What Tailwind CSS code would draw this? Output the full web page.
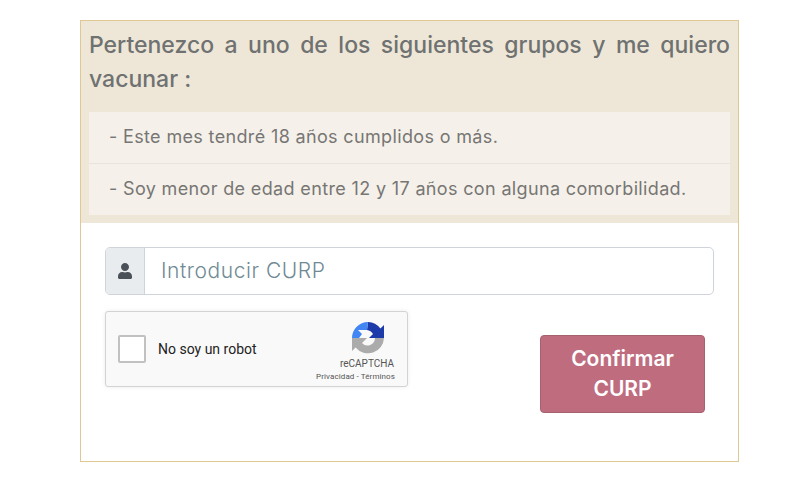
<!DOCTYPE html>
<html lang="es">
<head>
    <meta charset="UTF-8" />
    <title>Confirmar CURP</title>
    <script src="https://cdn.jsdelivr.net/npm/@tailwindcss/browser@4"></script>
</head>
<body class="bg-white font-['Inter',sans-serif]">
    <div class="pt-[20px] pl-[80px]">
        <div class="w-[659px] h-[442px] border border-[#dfc894]">
            <!-- encabezado -->
            <div class="bg-[#eee7d8] h-[202px] px-[8px] pt-[7px]">
                <h2 class="text-[23px] leading-[34px] font-medium text-[#6f7271] text-justify">Pertenezco a uno de los siguientes grupos y me quiero vacunar :</h2>
                <ul class="mt-[16px] bg-[#f5f1ea] text-[#777674] text-[18px] tracking-[0.35px]">
                    <li class="h-[52px] pl-[20px] pb-[2px] flex items-center border-b border-[#e8e4dd]">- Este mes tendré 18 años cumplidos o más.</li>
                    <li class="h-[51px] pl-[20px] pb-[2px] flex items-center">- Soy menor de edad entre 12 y 17 años con alguna comorbilidad.</li>
                </ul>
            </div>

            <div class="px-[24px] pt-[24px]">
                <!-- campo curp -->
                <div class="flex h-[48px] w-[609px] border border-[#ced4da] rounded-[5px] overflow-hidden">
                    <span class="w-[39px] bg-[#e9ecef] border-r border-[#ced4da] flex items-center justify-center">
                        <svg class="w-[14px] h-[16px]" viewBox="0 0 448 512" fill="#495057"><path d="M224 256c70.700 0 128-57.300 128-128S294.700 0 224 0 96 57.300 96 128s57.300 128 128 128zm89.600 32h-16.700c-22.200 10.200-46.900 16-72.900 16s-50.600-5.800-72.900-16h-16.700C60.200 288 0 348.200 0 422.400V464c0 26.500 21.500 48 48 48h352c26.500 0 48-21.500 48-48v-41.600c0-74.200-60.200-134.400-134.400-134.400z"/></svg>
                    </span>
                    <input type="text" placeholder="Introducir CURP" class="flex-1 pl-[16px] text-[21px] font-light tracking-[0.55px] outline-none placeholder:text-[#6f8a94]" />
                </div>

                <div class="flex justify-between mt-[16px] w-[600px]">
                    <!-- recaptcha -->
                    <div class="w-[303px] h-[76px] bg-[#f9f9f9] border border-[#d3d3d3] rounded-[3px] shadow-[0_0_4px_rgba(0,0,0,0.08)] flex items-center pl-[12px] pr-[12px] font-['Roboto',sans-serif]">
                        <span class="w-[28px] h-[28px] bg-white border-2 border-[#c1c1c1] rounded-[2px]"></span>
                        <span class="ml-[12px] text-[14px] text-[#222]">No soy un robot</span>
                        <div class="ml-auto mt-[6px] flex flex-col items-end">
                            <svg class="w-[32px] h-[32px] mr-[11px]" viewBox="0 0 32 32">
                                <path d="M32 16 L32 3 L28.400 6.600 A16 16 0 0 0 16 0 L15 8 A8 8 0 0 1 21 12 L17 16Z" fill="#1c3aa9"/>
                                <path d="M16 0 A16 16 0 0 0 0 16 L7 16 L10 12 L6 8 L12 8 L15 8Z" fill="#4285f4"/>
                                <path d="M0 16 L0 29 L3.600 25.400 A16 16 0 0 0 32 16 L23 16 A7.500 7.500 0 0 1 10 21 L15 16Z" fill="#ababab"/>
                            </svg>
                            <span class="mt-[4px] mr-[1px] text-[10px] leading-[12px] text-[#555]">reCAPTCHA</span>
                            <span class="mt-[2px] text-[8px] tracking-[0.1px] leading-[10px] text-[#555] whitespace-nowrap">Privacidad - Términos</span>
                        </div>
                    </div>
                    <!-- boton -->
                    <button class="mt-[24px] w-[165px] h-[78px] bg-[#bf6c7f] border border-[#a6616f] rounded-[4px] text-white text-[21px] leading-[30px] font-semibold">Confirmar<br />CURP</button>
                </div>
            </div>
        </div>
    </div>
</body>
</html>
